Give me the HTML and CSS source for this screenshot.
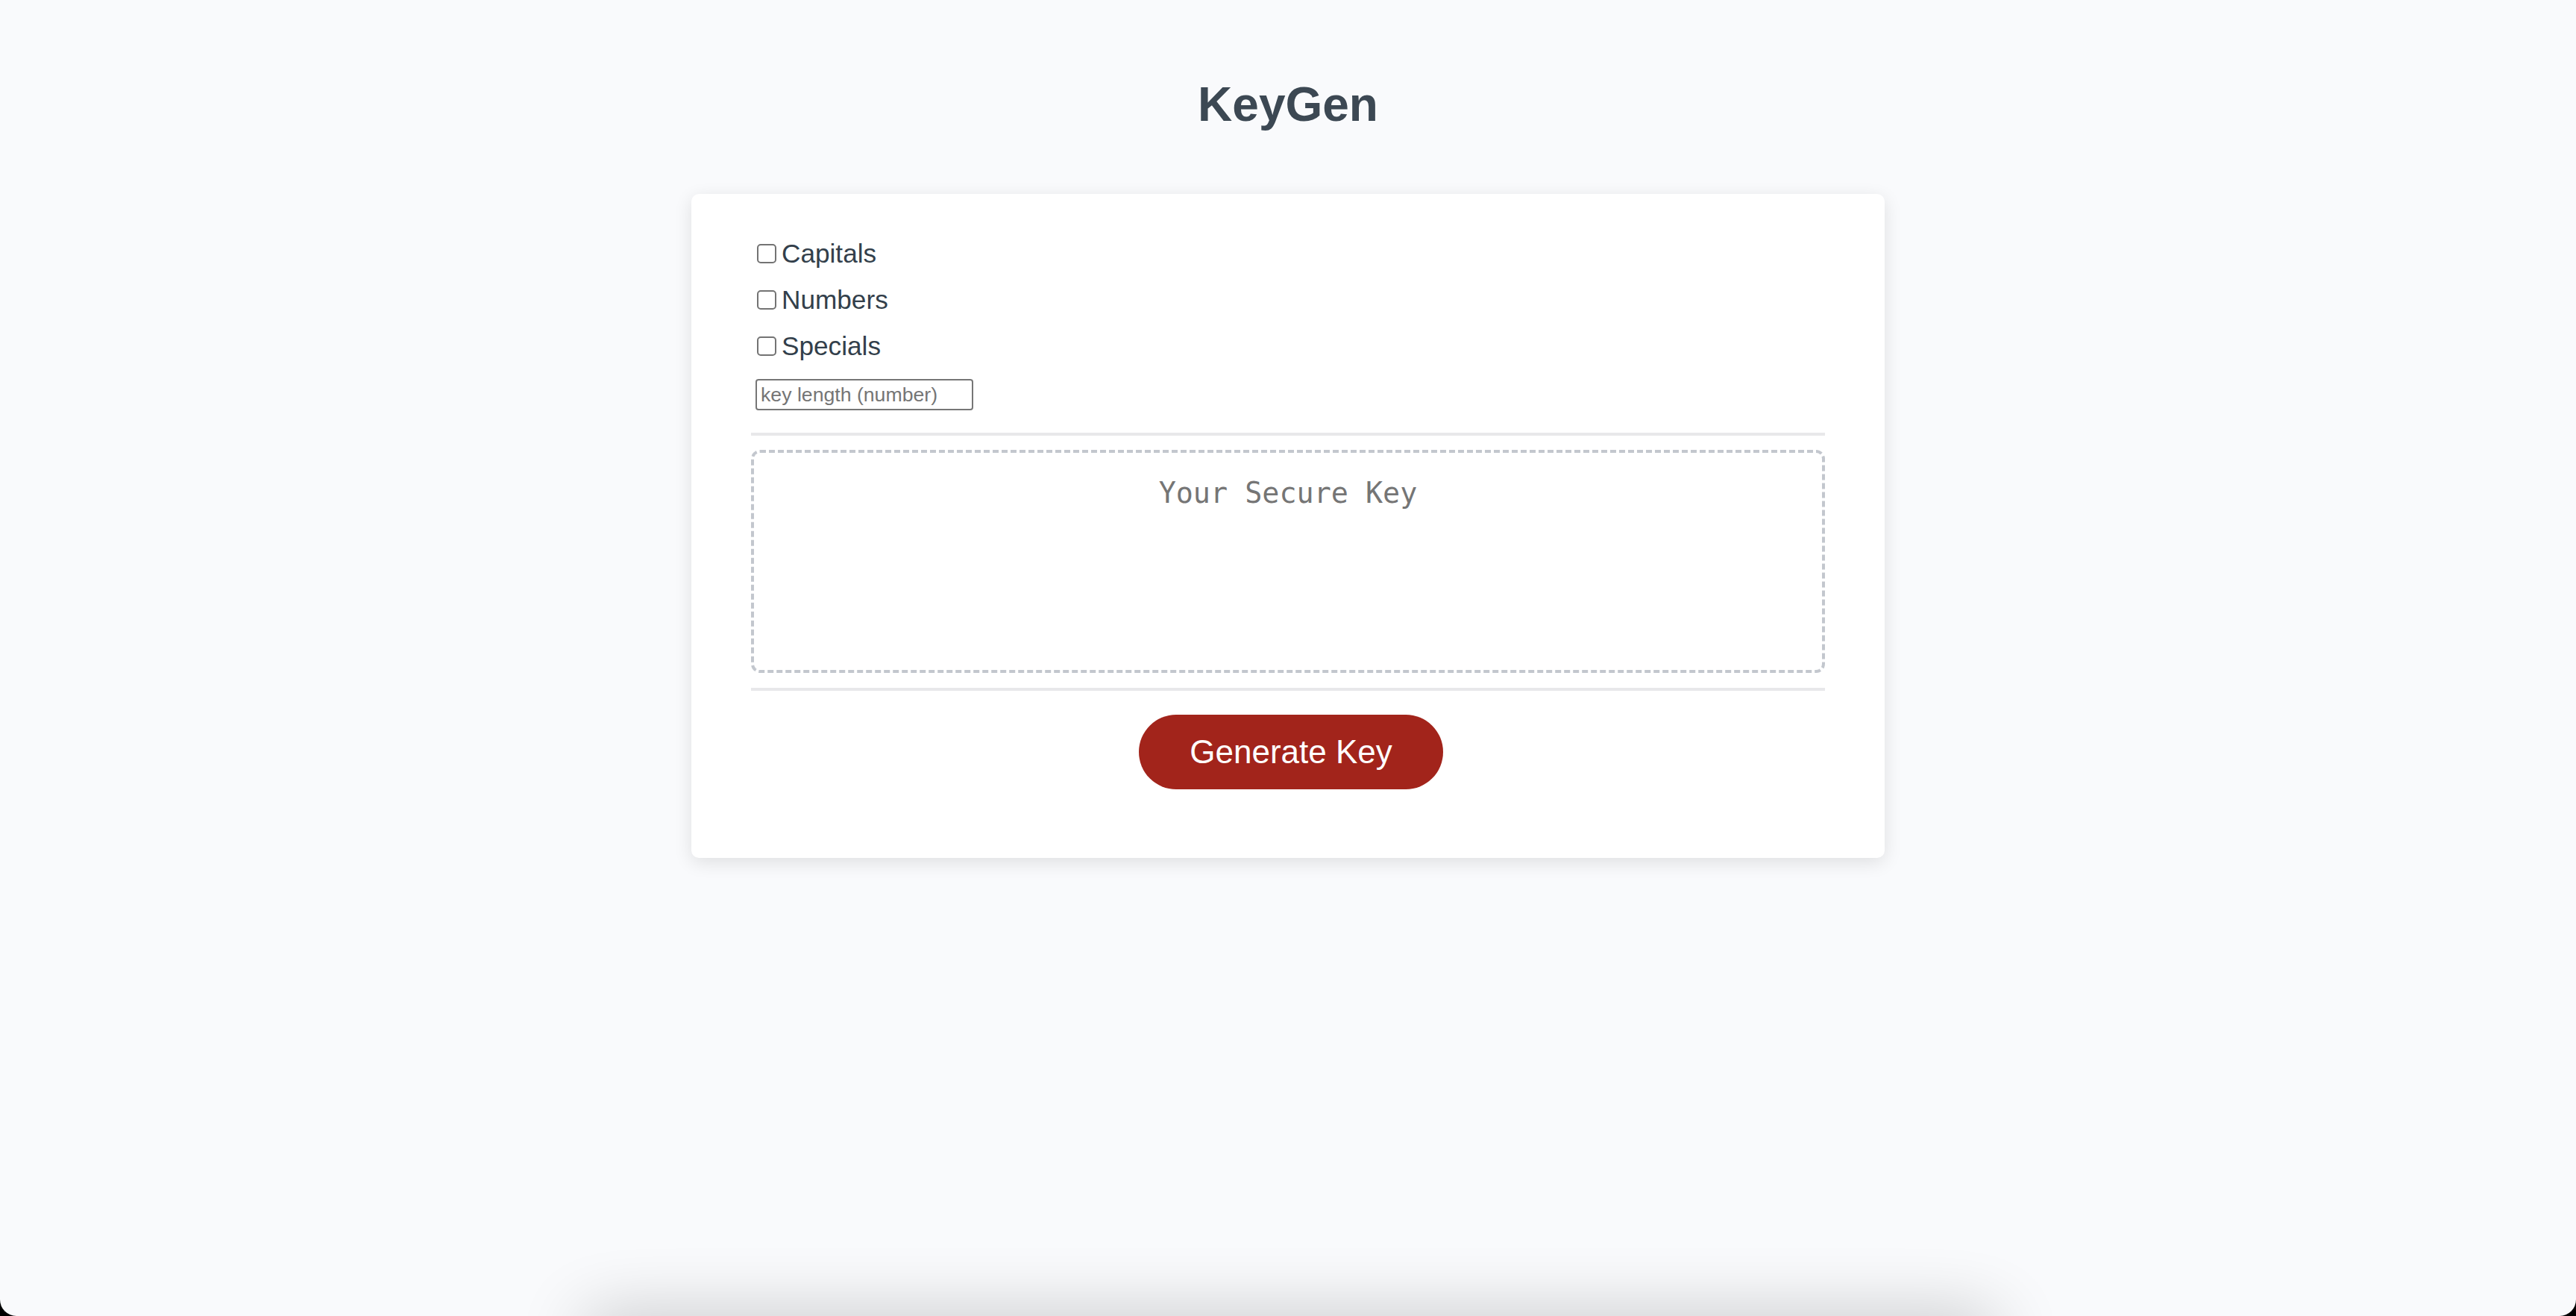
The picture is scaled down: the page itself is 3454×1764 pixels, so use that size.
FILE: index.html
```
<!DOCTYPE html>
<html lang="en">
<head>
<meta charset="utf-8">
<title>KeyGen</title>
<link rel="stylesheet" href="styles.css">
</head>
<body>
<main class="page">
  <h1 class="title">KeyGen</h1>
  <section class="card">
    <div class="options">
      <label class="option"><input type="checkbox" class="check"><span>Capitals</span></label>
      <label class="option"><input type="checkbox" class="check"><span>Numbers</span></label>
      <label class="option"><input type="checkbox" class="check"><span>Specials</span></label>
    </div>
    <input type="text" class="length" placeholder="key length (number)">
    <div class="rule"></div>
    <textarea class="output" placeholder="Your Secure Key" readonly></textarea>
    <div class="rule rule-after"></div>
    <div class="actions">
      <button type="button" class="generate">Generate Key</button>
    </div>
  </section>
</main>
<div class="bottom-shade"></div>
</body>
</html>
```
FILE: styles.css
```
html {
  background: #000;
}
body {
  margin: 0;
  min-height: 100vh;
  background: #f9fafc;
  border-radius: 0 0 22px 22px;
  overflow: hidden;
  font-family: "Liberation Sans", Arial, Helvetica, sans-serif;
}
.page {
  padding-top: 103px;
}
.title {
  margin: 0 0 83px;
  text-align: center;
  font-size: 64px;
  line-height: 74px;
  font-weight: 700;
  color: #3c4853;
}
.card {
  box-sizing: border-box;
  width: 1600px;
  margin: 0 auto;
  padding: 49px 80px 92px;
  background: #fff;
  border-radius: 10px;
  box-shadow: 0 6px 24px rgba(0, 0, 0, 0.11);
}
.options {
  display: flex;
  flex-direction: column;
}
.option {
  display: flex;
  align-items: center;
  height: 62px;
  font-size: 35.2px;
  color: #333f4b;
}
.check {
  appearance: none;
  -webkit-appearance: none;
  box-sizing: border-box;
  width: 26px;
  height: 26px;
  margin: 0 7px 0 8px;
  border: 2px solid #737373;
  border-radius: 5px;
  background: #fff;
}
.length {
  display: block;
  box-sizing: border-box;
  width: 292px;
  height: 42px;
  margin: 13px 0 0 6px;
  padding: 0 5px;
  border: 2px solid #767676;
  border-radius: 4px;
  font-family: "Liberation Sans", Arial, sans-serif;
  font-size: 26.67px;
  color: #222;
  background: #fff;
}
.length::placeholder {
  color: #757575;
  opacity: 1;
}
.rule {
  height: 4px;
  margin-top: 30px;
  background: #e8e8ea;
}
.rule-after {
  margin-top: 20px;
}
.output {
  display: block;
  box-sizing: border-box;
  width: 100%;
  height: 299px;
  margin: 19px 0 0;
  padding: 31px 20px 0;
  border: 4px dashed #c3c7ce;
  border-radius: 12px;
  resize: none;
  outline: none;
  text-align: center;
  font-family: "DejaVu Sans Mono", "Liberation Mono", monospace;
  font-size: 38.4px;
  line-height: 1.2;
  color: #333;
  background: #fff;
}
.output::placeholder {
  color: #757575;
  opacity: 1;
}
.actions {
  display: flex;
  justify-content: center;
  margin-top: 32px;
  padding-left: 8px;
}
.generate {
  display: flex;
  align-items: center;
  justify-content: center;
  width: 408px;
  height: 100px;
  padding: 0;
  border: none;
  border-radius: 50px;
  background: #a2241b;
  color: #fff;
  font-family: "Liberation Sans", Arial, sans-serif;
  font-size: 44px;
}
.bottom-shade {
  position: fixed;
  left: 780px;
  width: 1900px;
  bottom: -60px;
  height: 60px;
  border-radius: 40px;
  box-shadow: 0 0 90px rgba(0, 0, 0, 0.24);
  pointer-events: none;
}
```
